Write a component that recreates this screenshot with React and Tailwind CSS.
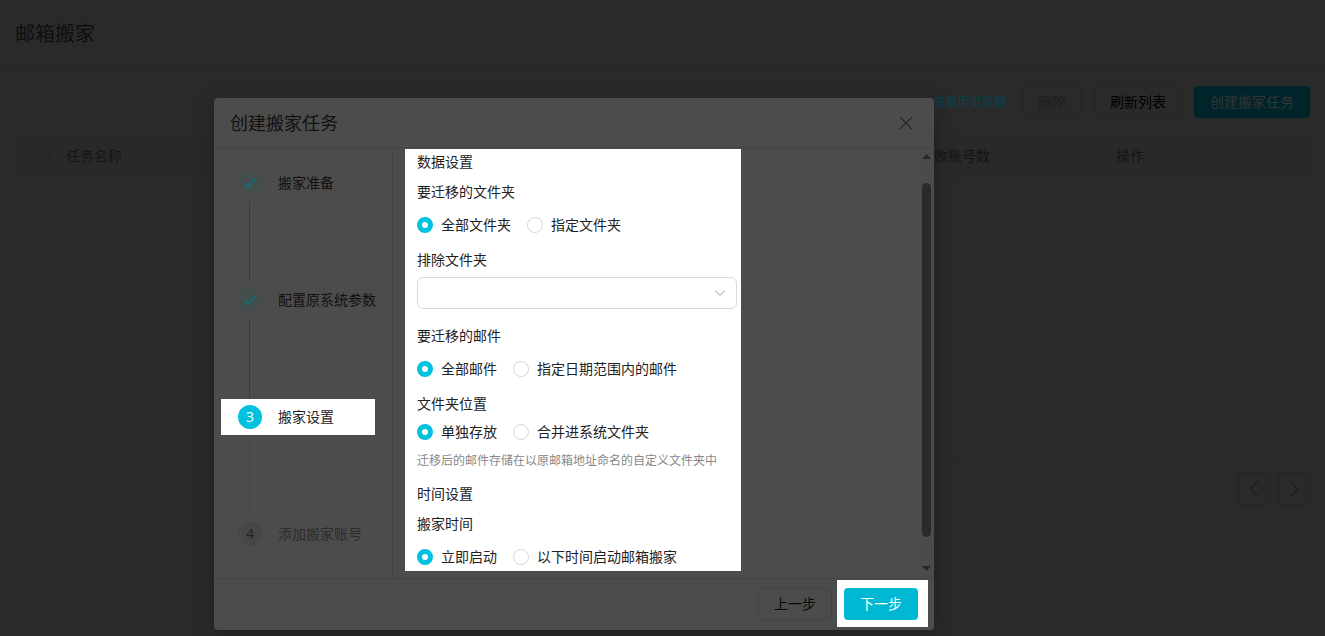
import { ChevronDown, ChevronLeft, ChevronRight, X } from "lucide-react";

const steps = [
  { title: "搬家准备", status: "done" },
  { title: "配置原系统参数", status: "done" },
  { title: "搬家设置", status: "active" },
  { title: "添加搬家账号", status: "waiting" },
];

const circleStyles = {
  done: "bg-[#454e4d] text-[#007585]",
  active: "bg-[#00c1de] text-white",
  waiting: "bg-[#474747] text-[#222]",
};

const titleStyles = {
  done: "text-[#111]",
  active: "text-[#222]",
  waiting: "text-[#2c2c2c]",
};

const CheckMark = () => (
  <svg width="12" height="10" viewBox="0 0 12 10" fill="none" stroke="currentColor" strokeWidth="1.5">
    <path d="M0.7 5L4.6 9L11.3 0.8" />
  </svg>
);

const Step = ({ index, title, status, last }) => (
  <li>
    <div
      className={`flex h-9 items-center gap-4 pl-[17px] whitespace-nowrap ${
        status === "active" ? "bg-white" : ""
      }`}
    >
      <span
        className={`flex size-6 shrink-0 items-center justify-center rounded-full text-sm ${circleStyles[status]}`}
      >
        {status === "done" ? <CheckMark /> : index + 1}
      </span>
      <span className={titleStyles[status]}>{title}</span>
    </div>
    {!last && (
      <div
        className={`ml-7 h-[81px] w-px ${status === "done" ? "bg-[#00525e]" : "bg-[#474747]"}`}
      />
    )}
  </li>
);

const RadioGroup = ({ name, label, options }) => (
  <div role="radiogroup" aria-label={label} className="flex gap-4">
    {options.map((option, i) => (
      <label key={option} className="flex items-center gap-2">
        <input
          type="radio"
          name={name}
          defaultChecked={i === 0}
          className="size-4 appearance-none rounded-full border border-[#d9d9d9] bg-white checked:border-5 checked:border-[#00c1de]"
        />
        {option}
      </label>
    ))}
  </div>
);

const TaskPage = () => (
  <div>
    <header className="border-b border-[#262626] px-[15px] pt-[19px] pb-5">
      <h1 className="text-xl leading-[30px] text-[#0e0e0e]">邮箱搬家</h1>
    </header>

    <div className="px-[15px] pt-4">
      <div className="flex items-center justify-end gap-3">
        <a href="#history" className="mr-1 text-xs text-[#06424e]">
          查看历史数据
        </a>
        <button disabled className="h-8 rounded-sm border border-[#252525] px-[15px] text-[#1e1e1e]">
          删除
        </button>
        <button className="h-8 rounded-sm border border-[#252525] px-[15px] text-black">
          刷新列表
        </button>
        <button className="h-8 rounded-sm bg-[#00242a] px-4 text-[#353535]">创建搬家任务</button>
      </div>

      <div className="mt-4 min-h-[323px] border-b border-[#272727]">
        <table className="w-full table-fixed text-left text-[#151515]">
          <thead>
            <tr className="h-11 bg-[#292929]">
              <th className="w-[51px] pl-[19px]">
                <input
                  type="checkbox"
                  aria-label="全选"
                  className="block size-4 appearance-none rounded-sm border border-[#242424]"
                />
              </th>
              <th className="font-normal">任务名称</th>
              <th className="w-[196px] font-normal">失败账号数</th>
              <th className="w-[194px] font-normal">操作</th>
            </tr>
          </thead>
        </table>
      </div>

      <div className="mt-4 flex justify-end gap-2 text-[#1f1f1f]">
        <button
          aria-label="上一页"
          className="flex size-8 items-center justify-center rounded-sm border border-[#242424]"
        >
          <ChevronLeft size={30} strokeWidth={1} />
        </button>
        <button
          aria-label="下一页"
          className="flex size-8 items-center justify-center rounded-sm border border-[#242424]"
        >
          <ChevronRight size={30} strokeWidth={1} />
        </button>
      </div>
    </div>
  </div>
);

const SettingsForm = () => (
  <form className="mt-px ml-3 mb-[7px] w-[336px] bg-white px-3 pt-0.5 pb-[3px] leading-[22px] text-[#222]">
    <h3>数据设置</h3>
    <p className="mt-2 mb-[11px]">要迁移的文件夹</p>
    <RadioGroup name="folders" label="要迁移的文件夹" options={["全部文件夹", "指定文件夹"]} />

    <label htmlFor="exclude" className="mt-[13px] mb-1.5 block">
      排除文件夹
    </label>
    <div className="relative w-80">
      <select
        id="exclude"
        defaultValue=""
        className="block h-8 w-full appearance-none rounded-md border border-[#d9d9d9] bg-white px-3"
      >
        <option value=""></option>
      </select>
      <ChevronDown
        size={18}
        strokeWidth={1.5}
        className="pointer-events-none absolute top-[7px] right-2 text-[#bfbfbf]"
      />
    </div>

    <p className="mt-4 mb-[11px]">要迁移的邮件</p>
    <RadioGroup name="mails" label="要迁移的邮件" options={["全部邮件", "指定日期范围内的邮件"]} />

    <p className="mt-[13px] mb-1.5">文件夹位置</p>
    <RadioGroup name="position" label="文件夹位置" options={["单独存放", "合并进系统文件夹"]} />
    <p className="mt-[7px] mb-[11px] text-xs leading-[22px] text-[#888]">
      迁移后的邮件存储在以原邮箱地址命名的自定义文件夹中
    </p>

    <h3>时间设置</h3>
    <p className="mt-2 mb-[11px]">搬家时间</p>
    <RadioGroup name="start" label="搬家时间" options={["立即启动", "以下时间启动邮箱搬家"]} />
  </form>
);

const Scrollbar = () => (
  <div className="ml-auto flex w-[15px] flex-col items-center bg-[#4b4b4b] pt-1.5 pb-[7px]" aria-hidden="true">
    <svg width="9" height="5" viewBox="0 0 9 5" fill="#272727">
      <path d="M4.5 0L9 5H0z" />
    </svg>
    <div className="mt-6 mb-[29px] w-[9px] flex-1 rounded-full bg-[#2a2a2a]" />
    <svg width="9" height="5" viewBox="0 0 9 5" fill="#272727">
      <path d="M0 0H9L4.5 5z" />
    </svg>
  </div>
);

const CreateTaskDialog = () => (
  <div
    role="dialog"
    aria-labelledby="dialog-title"
    className="absolute top-[98px] left-[214px] w-[720px] rounded-sm bg-[#4c4c4c] shadow-[0_4px_20px_rgba(0,0,0,0.25)]"
  >
    <div className="flex h-[50px] items-center justify-between border-b border-[#444] px-4">
      <h2 id="dialog-title" className="text-lg text-[#111]">
        创建搬家任务
      </h2>
      <button aria-label="关闭" className="px-px text-[#262626]">
        <X size={22} strokeWidth={1.25} />
      </button>
    </div>

    <div className="flex">
      <ol className="w-[179px] shrink-0 border-r border-[#444] pt-[17px] pr-[17px] pl-[7px]">
        {steps.map((step, i) => (
          <Step key={step.title} index={i} last={i === steps.length - 1} {...step} />
        ))}
      </ol>
      <SettingsForm />
      <Scrollbar />
    </div>

    <div className="flex items-center justify-end gap-[5px] border-t border-[#444] pt-px pr-1.5 pb-[3px]">
      <button className="h-8 rounded-sm border border-[#434343] px-[15px] text-[#080808]">
        上一步
      </button>
      <div className="bg-white pt-2 pr-[10px] pb-[7px] pl-[7px]">
        <button className="block h-8 rounded-sm bg-[#00b8d4] px-4 text-white">下一步</button>
      </div>
    </div>
  </div>
);

export default function App() {
  return (
    <div className="relative min-h-screen overflow-hidden bg-[#2a2a2a] font-['Open_Sans','Noto_Sans_CJK_SC',sans-serif] text-sm">
      <TaskPage />
      <CreateTaskDialog />
    </div>
  );
}
